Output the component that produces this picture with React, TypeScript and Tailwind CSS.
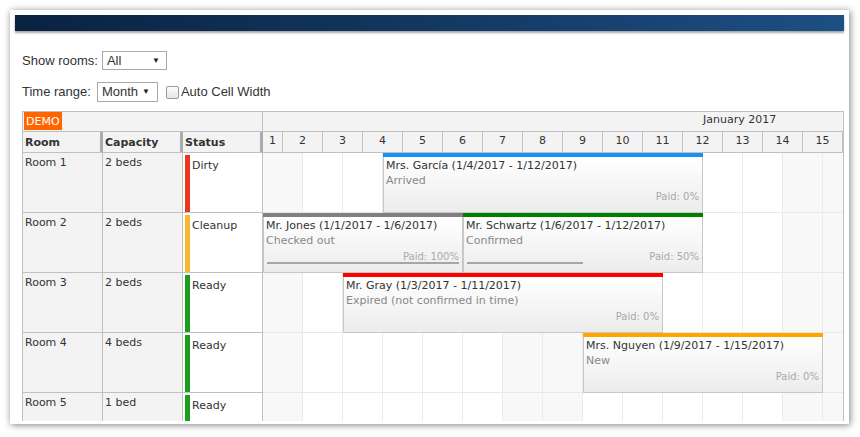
import React from "react";

type Ev = {
  start: number;
  days: number;
  text: string;
  status: string;
  bar: string;
  paid: number;
};

type Row = {
  name: string;
  cap: string;
  status: string;
  statusColor: string;
  events: Ev[];
};

const rows: Row[] = [
  {
    name: "Room 1",
    cap: "2 beds",
    status: "Dirty",
    statusColor: "bg-[#e8391f]",
    events: [
      { start: 4, days: 8, text: "Mrs. García (1/4/2017 - 1/12/2017)", status: "Arrived", bar: "bg-[#1691f4]", paid: 0 },
    ],
  },
  {
    name: "Room 2",
    cap: "2 beds",
    status: "Cleanup",
    statusColor: "bg-[#f7b731]",
    events: [
      { start: 1, days: 5, text: "Mr. Jones (1/1/2017 - 1/6/2017)", status: "Checked out", bar: "bg-[#808080]", paid: 100 },
      { start: 6, days: 6, text: "Mr. Schwartz (1/6/2017 - 1/12/2017)", status: "Confirmed", bar: "bg-[#008000]", paid: 50 },
    ],
  },
  {
    name: "Room 3",
    cap: "2 beds",
    status: "Ready",
    statusColor: "bg-[#1a9d1a]",
    events: [
      { start: 3, days: 8, text: "Mr. Gray (1/3/2017 - 1/11/2017)", status: "Expired (not confirmed in time)", bar: "bg-[#ff0000]", paid: 0 },
    ],
  },
  {
    name: "Room 4",
    cap: "4 beds",
    status: "Ready",
    statusColor: "bg-[#1a9d1a]",
    events: [
      { start: 9, days: 6, text: "Mrs. Nguyen (1/9/2017 - 1/15/2017)", status: "New", bar: "bg-[#ffa500]", paid: 0 },
    ],
  },
  { name: "Room 5", cap: "1 bed", status: "Ready", statusColor: "bg-[#1a9d1a]", events: [] },
];

const days = Array.from({ length: 15 }, (_, i) => i + 1);
const weekend = new Set([1, 7, 8, 14, 15]);

function Event({ ev }: { ev: Ev }) {
  const left = (ev.start - 1) * 40;
  const width = ev.days * 40;
  return (
    <div className="absolute top-0 h-[60px] flex flex-col z-10" style={{ left, width }}>
      <div className={`h-[4px] w-full shrink-0 ${ev.bar}`} />
      <div className="relative flex-1 border-l border-r border-b border-[#c8c8c8] bg-linear-to-b from-white to-[#ececec] pl-[2px] pt-[1px] leading-[15px] overflow-hidden">
        <div className="text-[#333] whitespace-nowrap">{ev.text}</div>
        <div className="text-[#888] whitespace-nowrap">{ev.status}</div>
        <div className="absolute right-[3px] bottom-[9px] text-[10px] leading-[12px] text-[#aaa]">Paid: {ev.paid}%</div>
        {ev.paid > 0 && (
          <div
            className="absolute left-[3px] bottom-[8px] h-[2px] bg-[#a6a6a6]"
            style={{ width: Math.round(((width - 8) * ev.paid) / 100) }}
          />
        )}
      </div>
    </div>
  );
}

export default function App() {
  return (
    <div className="w-[860px] h-[437px] bg-white pt-[10px] pl-[10px]">
      <div className="w-[839px] h-[414px] bg-white p-[5px] overflow-hidden shadow-[1px_1px_7px_rgba(0,0,0,0.5)]">
        <div className="h-[16px] w-full bg-linear-to-r from-[#0a2240] to-[#1d4f84] shadow-[0_2px_2px_rgba(0,0,0,0.35)]" />
        <div className="pl-[7px] font-['Liberation_Sans',Arial,sans-serif] text-[13px] text-[#333]">
          <div className="mt-[20px] h-[19px] flex items-center">
            <span>Show rooms:</span>
            <div className="ml-[4px] h-[19px] w-[65px] border border-[#a9a9a9] bg-white flex items-center justify-between pl-[4px] pr-[6px]">
              <span>All</span>
              <span className="text-[8px] text-[#222]">▼</span>
            </div>
          </div>
          <div className="mt-[12px] h-[20px] flex items-center">
            <span>Time range:</span>
            <div className="ml-[6px] h-[20px] w-[61px] border border-[#a9a9a9] bg-white flex items-center justify-between pl-[4px] pr-[7px]">
              <span>Month</span>
              <span className="text-[8px] text-[#222]">▼</span>
            </div>
            <div className="ml-[8px] w-[13px] h-[13px] border border-[#9a9a9a] rounded-[2px] bg-linear-to-b from-[#fdfdfd] to-[#e6e6e6]" />
            <span className="ml-[2px]">Auto Cell Width</span>
          </div>

          <div className="mt-[9px] w-[822px] h-[310px] overflow-hidden border-t border-l border-r border-[#c0c0c0] flex items-start font-['DejaVu_Sans',Verdana,sans-serif] text-[11px] leading-[13px] text-[#333]">
            {/* left section */}
            <div className="w-[240px] flex flex-col shrink-0">
              <div className="h-[20px] shrink-0 bg-[#f3f3f3] border-b border-r border-[#c0c0c0] pl-[1px]">
                <span className="inline-flex items-center h-[18px] px-[2px] bg-[#ff6600] text-white">DEMO</span>
              </div>
              <div className="h-[21px] shrink-0 flex border-b border-[#c0c0c0] bg-[#f3f3f3] font-bold">
                <div className="w-[80px] border-r-[3px] border-[#acacac] pl-[2px] flex items-center">Room</div>
                <div className="w-[80px] border-r-[3px] border-[#acacac] pl-[2px] flex items-center">Capacity</div>
                <div className="w-[80px] border-r-[3px] border-[#acacac] pl-[2px] flex items-center">Status</div>
              </div>
              {rows.map((r) => (
                <div key={r.name} className="h-[60px] shrink-0 flex border-b border-[#c0c0c0]">
                  <div className="w-[80px] border-r border-[#c0c0c0] bg-[#f3f3f3] pl-[2px] pt-[3px]">{r.name}</div>
                  <div className="w-[80px] border-r border-[#c0c0c0] bg-[#f3f3f3] pl-[2px] pt-[3px]">{r.cap}</div>
                  <div className="relative w-[80px] border-r border-[#c0c0c0] bg-white pl-[9px] pt-[6px]">
                    <div className={`absolute left-[2px] top-[2px] bottom-0 w-[5px] ${r.statusColor}`} />
                    {r.status}
                  </div>
                </div>
              ))}
            </div>

            {/* timeline */}
            <div className="w-[580px] flex flex-col shrink-0">
              <div className="h-[20px] shrink-0 bg-[#f3f3f3] border-b border-[#c0c0c0] pl-[440px] pt-[1px] whitespace-nowrap">
                January 2017
              </div>
              <div className="h-[21px] shrink-0 flex border-b border-[#c0c0c0] bg-[#f3f3f3]">
                {days.map((d) => (
                  <div
                    key={d}
                    className={
                      d === 1
                        ? "w-[20px] shrink-0 border-r border-[#c0c0c0] flex justify-center pt-[2px]"
                        : "w-[40px] shrink-0 border-r border-[#c0c0c0] flex justify-center pt-[2px]"
                    }
                  >
                    {d}
                  </div>
                ))}
              </div>
              {rows.map((r) => (
                <div key={r.name} className="relative h-[60px] shrink-0 flex border-b border-[#e8e8e8]">
                  {days.map((d) => (
                    <div
                      key={d}
                      className={
                        (d === 15 ? "w-[20px] " : "w-[40px] border-r border-[#ebebeb] ") +
                        (weekend.has(d) ? "shrink-0 bg-[#f8f8f8]" : "shrink-0 bg-white")
                      }
                    />
                  ))}
                  {r.events.map((ev) => (
                    <Event key={ev.text} ev={ev} />
                  ))}
                </div>
              ))}
            </div>
          </div>
        </div>
      </div>
    </div>
  );
}
